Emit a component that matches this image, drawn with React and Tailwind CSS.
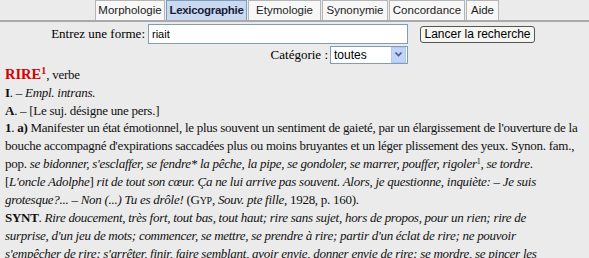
import React from "react";

const tabs = [
  ["Morphologie", "w-[70px]"],
  ["Lexicographie", "w-[81px]"],
  ["Etymologie", "w-[73px]"],
  ["Synonymie", "w-[66px]"],
  ["Concordance", "w-[76px]"],
  ["Aide", "w-[33px]"],
];

export default function App() {
  return (
    <div className="w-[589px] h-[258px] overflow-hidden bg-[#ebebeb] text-black">
      {/* Tab bar */}
      <div className="h-[22px] border-b-2 border-[#a9a9a9]">
        <div className="flex pl-[95px] gap-[1px] h-[20px] items-end" style={{ fontFamily: "'Liberation Sans', Arial, sans-serif" }}>
          {tabs.map(([t, w]) => (
            <div
              key={t}
              className={
                t === "Lexicographie"
                  ? `${w} h-[20px] flex items-center justify-center text-[11.5px] tracking-[-0.3px] font-bold bg-[#c9daf0] border border-b-0 border-[#7f9db9] text-[#1a1a3a]`
                  : `${w} h-[20px] flex items-center justify-center text-[11.5px] bg-[#f7f7f7] border border-b-0 border-[#b5b5b5] text-[#222]`
              }
            >
              {t}
            </div>
          ))}
        </div>
      </div>

      {/* Form */}
      <div className="flex flex-col" style={{ fontFamily: "'Liberation Serif', 'Times New Roman', serif" }}>
        <div className="flex items-center h-[22px] mt-[1px]">
          <div className="w-[145px] text-right text-[13px]">Entrez une forme:</div>
          <div className="ml-[3px] w-[260px] h-[20px] bg-white border border-[#7f9db9] flex items-center pl-[3px] text-[11px]" style={{ fontFamily: "'Liberation Sans', Arial, sans-serif" }}>
            riait
          </div>
          <div className="ml-[12px] w-[115px] h-[17px] rounded-[3px] border border-[#555] bg-[#f5f5f2] flex items-center justify-center text-[12px]" style={{ fontFamily: "'Liberation Sans', Arial, sans-serif" }}>
            Lancer la recherche
          </div>
        </div>
        <div className="flex items-center h-[19px]">
          <div className="w-[328px] text-right text-[13px]">Catégorie :</div>
          <div className="ml-[2px] w-[78px] h-[18px] bg-white border border-[#7f9db9] flex items-center justify-between text-[12px]" style={{ fontFamily: "'Liberation Sans', Arial, sans-serif" }}>
            <span className="pl-[3px]">toutes</span>
            <span className="w-[15px] h-[16px] bg-[#c1d3fb] border border-[#b5c8f0] flex items-center justify-center mr-[1px]">
              <svg width="7" height="5" viewBox="0 0 7 5"><path d="M0.5 0.5 L3.5 3.5 L6.5 0.5" stroke="#4d6185" strokeWidth="1.6" fill="none" /></svg>
            </span>
          </div>
        </div>
      </div>

      {/* Body */}
      <div className="px-[5px] mt-[2px] text-[13px] leading-[17.8px] tracking-[-0.27px] whitespace-nowrap text-[#111]" style={{ fontFamily: "'Liberation Serif', 'Times New Roman', serif" }}>
        <div className="h-[17.8px]">
          <span className="font-bold text-[#d40000] text-[14.5px] tracking-normal">RIRE<sup className="text-[10px] leading-none">1</sup></span>, verbe
        </div>
        <div><b>I</b>. – <i>Empl. intrans.</i></div>
        <div><b>A</b>. – [Le suj. désigne une pers.]</div>
        <div><b>1</b>. <b>a)</b> Manifester un état émotionnel, le plus souvent un sentiment de gaieté, par un élargissement de l'ouverture de la</div>
        <div>bouche accompagné d'expirations saccadées plus ou moins bruyantes et un léger plissement des yeux. Synon. fam.,</div>
        <div className="h-[17.8px]">pop. <i>se bidonner, s'esclaffer, se fendre* la pêche, la pipe, se gondoler, se marrer, pouffer, rigoler</i><sup className="text-[8px] leading-none">1</sup>, <i>se tordre</i>.</div>
        <div>[<i>L'oncle Adolphe</i>] <i>rit de tout son cœur. Ça ne lui arrive pas souvent. Alors, je questionne, inquiète: – Je suis</i></div>
        <div><i>grotesque?... – Non (...) Tu es drôle!</i> (G<span className="text-[10px]">YP</span>, <i>Souv. pte fille</i>, 1928, p. 160).</div>
        <div><b>SYNT</b>. <i>Rire doucement, très fort, tout bas, tout haut; rire sans sujet, hors de propos, pour un rien; rire de</i></div>
        <div><i>surprise, d'un jeu de mots; commencer, se mettre, se prendre à rire; partir d'un éclat de rire; ne pouvoir</i></div>
        <div><i>s'empêcher de rire; s'arrêter, finir, faire semblant, avoir envie, donner envie de rire; se mordre, se pincer les</i></div>
      </div>
    </div>
  );
}
